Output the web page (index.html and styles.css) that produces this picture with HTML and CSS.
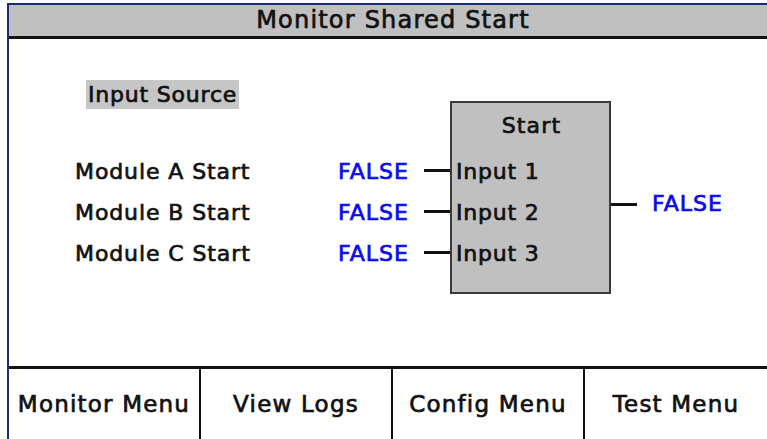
FILE: index.html
```html
<!DOCTYPE html>
<html>
<head>
<meta charset="utf-8">
<link rel="stylesheet" href="styles.css">
</head>
<body>
<div class="screen">
  <div class="titlebar">Monitor Shared Start</div>
  <div class="main">
    <div class="diagram">
      <div class="src">Input Source</div>
      <div class="lbl r3">Module A Start</div>
      <div class="lbl r4">Module B Start</div>
      <div class="lbl r5">Module C Start</div>
      <div class="val r3">FALSE</div>
      <div class="val r4">FALSE</div>
      <div class="val r5">FALSE</div>
      <div class="wire r3"></div>
      <div class="wire r4"></div>
      <div class="wire r5"></div>
      <div class="block"></div>
      <div class="block-title">Start</div>
      <div class="pin r3">Input 1</div>
      <div class="pin r4">Input 2</div>
      <div class="pin r5">Input 3</div>
      <div class="out-wire"></div>
      <div class="out-val">FALSE</div>
    </div>
  </div>
  <div class="menu">
    <div class="btn">Monitor Menu</div>
    <div class="btn">View Logs</div>
    <div class="btn">Config Menu</div>
    <div class="btn btn-last">Test Menu</div>
  </div>
</div>
</body>
</html>
```
FILE: styles.css
```css
html, body {
  margin: 0;
  padding: 0;
  background: #ffffff;
}
body {
  width: 767px;
  height: 439px;
  overflow: hidden;
  font-family: "DejaVu Sans", sans-serif;
  color: #111;
  -webkit-text-stroke: 0.7px currentColor;
}
.screen {
  box-sizing: border-box;
  margin: 3px 0 0 7px;
  height: 436px;
  border-top: 2px solid #14307a;
  border-left: 2px solid #14307a;
  display: flex;
  flex-direction: column;
}
.titlebar {
  height: 31px;
  background: #c0c0c0;
  border-bottom: 3px solid #111;
  text-align: center;
  font-size: 24px;
  line-height: 31px;
  letter-spacing: 1.2px;
  padding-left: 10px;
}
.main {
  flex: 1;
  padding-top: 41px;
}
.diagram {
  margin-left: 66px;
  display: grid;
  grid-template-columns: 263px 86px 26px 161px 26px auto;
  grid-template-rows: 21px 50px 41px 41px 41px 20px;
  font-size: 22px;
  letter-spacing: 0.8px;
  line-height: 24px;
}
.src {
  grid-column: 1;
  grid-row: 1 / 3;
  align-self: start;
  justify-self: start;
  margin-left: 11px;
  background: #c6c6c6;
  height: 29px;
  line-height: 29px;
  padding: 0 2px 0 2px;
}
.r3 { grid-row: 3; }
.r4 { grid-row: 4; }
.r5 { grid-row: 5; }
.lbl {
  grid-column: 1;
  align-self: center;
  letter-spacing: 0.9px;
}
.val {
  grid-column: 2;
  align-self: center;
  color: #0a0af0;
  letter-spacing: 1px;
}
.wire {
  grid-column: 3;
  align-self: center;
  height: 3px;
  margin-top: -3px;
  background: #111;
}
.block {
  grid-column: 4;
  grid-row: 2 / 7;
  background: #c0c0c0;
  border: 2px solid #3a3a3a;
}
.block-title {
  grid-column: 4;
  grid-row: 2;
  justify-self: center;
  align-self: center;
  padding-left: 2px;
  letter-spacing: 1.2px;
}
.pin {
  grid-column: 4;
  align-self: center;
  padding-left: 6px;
}
.out-wire {
  grid-column: 5;
  grid-row: 2 / 7;
  align-self: start;
  margin-top: 102px;
  height: 3px;
  background: #111;
}
.out-val {
  grid-column: 6;
  grid-row: 2 / 7;
  align-self: start;
  margin-top: 91px;
  padding-left: 15px;
  color: #0a0af0;
  letter-spacing: 1px;
}
.menu {
  height: 70px;
  border-top: 3px solid #111;
  display: flex;
}
.btn {
  box-sizing: border-box;
  flex: 0 0 192px;
  display: flex;
  align-items: center;
  justify-content: center;
  font-size: 23px;
  letter-spacing: 1.2px;
  border-right: 2px solid #111;
}
.btn-last {
  flex: 1;
  border-right: none;
}
```
